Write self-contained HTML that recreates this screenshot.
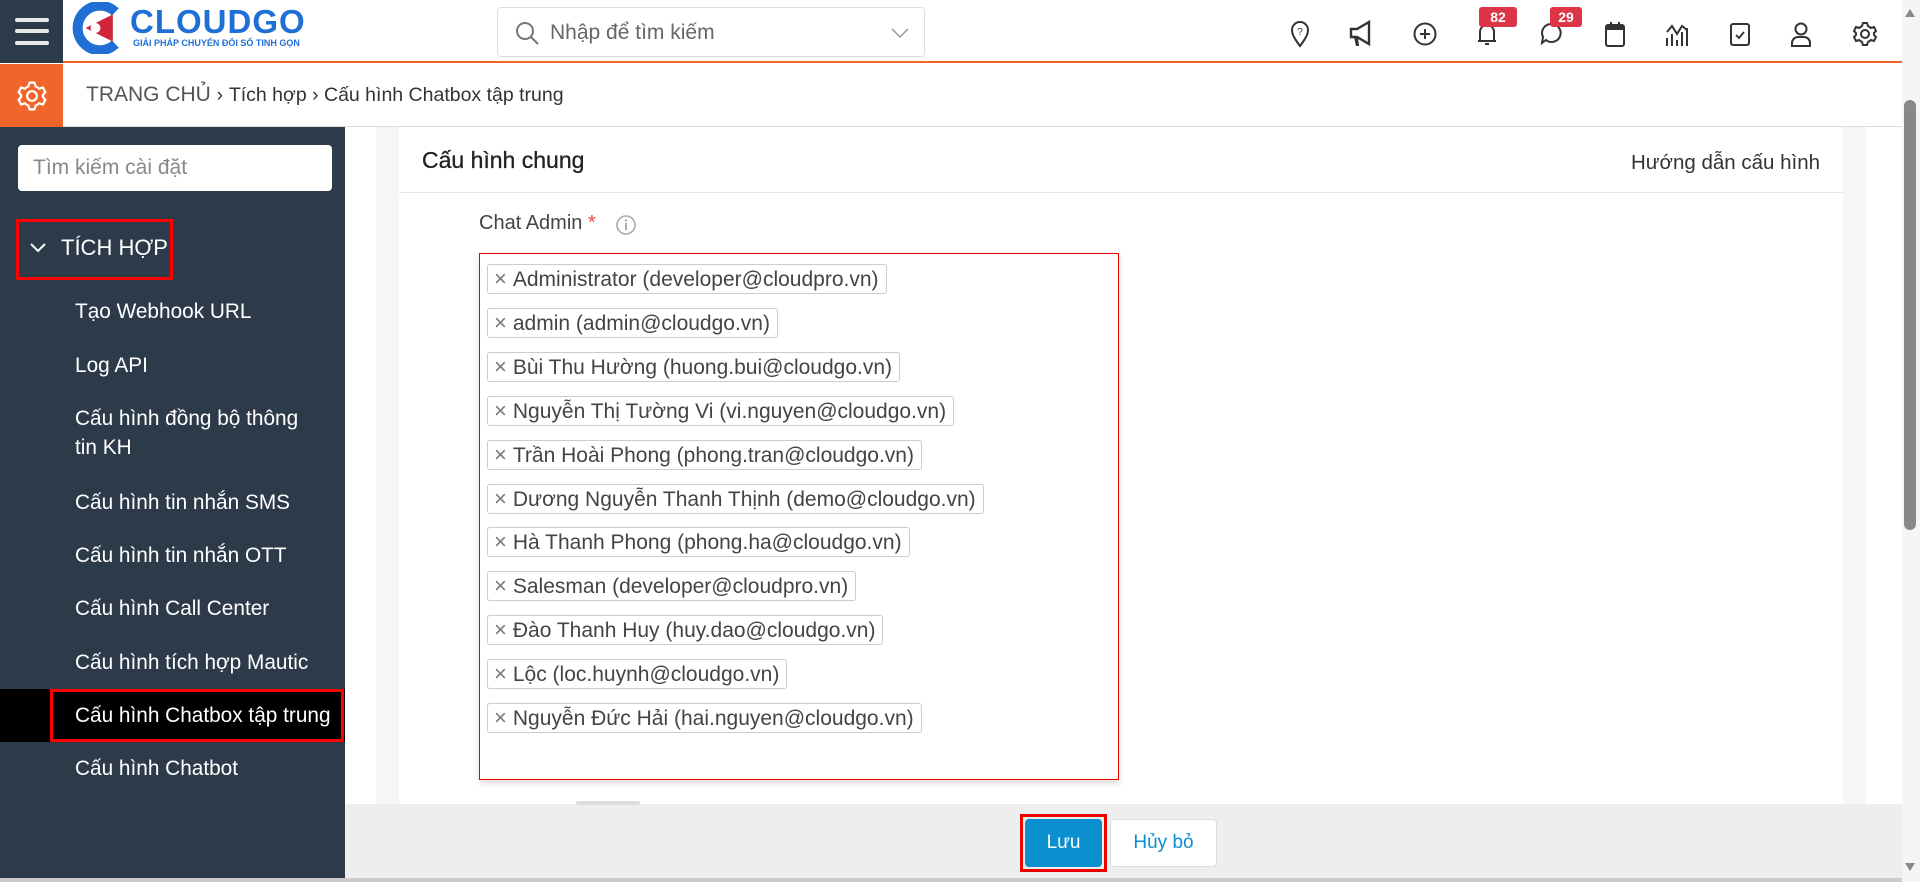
<!DOCTYPE html>
<html><head><meta charset="utf-8">
<style>
*{box-sizing:border-box;margin:0;padding:0}
body{width:1920px;height:882px;overflow:hidden;position:relative;font-family:"Liberation Sans",sans-serif;background:#fff;color:#333}
.abs{position:absolute}
.top{left:0;top:0;width:1902px;height:63px;background:#fff;border-bottom:2px solid #f0652a}
.ham{left:0;top:0;width:63px;height:63px;background:#2d3a4a}
.ham span{position:absolute;left:15px;width:34px;height:4px;background:#e8e8e8;border-radius:2px}
.search{left:497px;top:7px;width:428px;height:50px;border:1px solid #ddd;border-radius:4px;background:#fff}
.search .ph{position:absolute;left:52px;top:13px;font-size:21px;color:#666}
.bc{left:0;top:64px;width:1902px;height:63px;background:#fff;border-bottom:1px solid #ddd}
.gear{left:0;top:64px;width:63px;height:63px;background:#f0652a}
.side{left:0;top:127px;width:345px;height:755px;background:#2d3a4a;color:#fff}
.sin{left:18px;top:145px;width:314px;height:46px;background:#fff;border-radius:4px;color:#888;font-size:21px;padding:11px 15px}
.item{position:absolute;left:75px;font-size:20.8px;color:#fff;line-height:29px}
.icon{position:absolute;top:20px}
.badge{position:absolute;top:7px;height:20px;background:#dc3545;color:#fff;font-size:14px;font-weight:bold;border-radius:3px;text-align:center;line-height:20px}
.tag{position:absolute;left:487px;height:30px;border:1px solid #ccc;border-radius:3px;font-size:21px;color:#444;line-height:28px;padding:0 7px 0 6px;white-space:nowrap;background:#fff}
.tag b{font-weight:normal;color:#777;margin-right:6px;font-size:22px}
</style></head><body>
<div class="abs top"></div>
<div class="abs ham"><span style="top:18px"></span><span style="top:29px"></span><span style="top:41px"></span></div>
<svg class="abs" style="left:70px;top:2px" width="56" height="52" viewBox="0 0 44 42">
<path d="M36 8 A18 18 0 1 0 36 34" fill="none" stroke="#1f6fd6" stroke-width="8"/>
<path d="M12 21 L34 10 L34 32 Z" fill="#d0253c"/><circle cx="20" cy="21" r="4" fill="#fff"/>
</svg>
<div class="abs" style="left:130px;top:3px;font-size:33px;font-weight:bold;color:#1f6fd6;letter-spacing:1px">CLOUDGO</div>
<div class="abs" style="left:133px;top:38px;font-size:9px;font-weight:bold;color:#1f6fd6">GIẢI PHÁP CHUYỂN ĐỔI SỐ TINH GỌN</div>
<div class="abs search">
<svg style="position:absolute;left:16px;top:12px" width="26" height="26" viewBox="0 0 26 26"><circle cx="11" cy="11" r="8" fill="none" stroke="#777" stroke-width="2"/><path d="M17 17l7 7" stroke="#777" stroke-width="2"/></svg>
<div class="ph">Nhập để tìm kiếm</div>
<svg style="position:absolute;right:14px;top:18px" width="20" height="14" viewBox="0 0 20 14"><path d="M2 3l8 8 8-8" fill="none" stroke="#999" stroke-width="1.5"/></svg>
</div>
<svg class="icon" style="left:1289px" width="22" height="28" viewBox="0 0 22 28"><path d="M11 26C5 18 3 14 3 10a8 8 0 0 1 16 0c0 4-2 8-8 16z" fill="none" stroke="#333" stroke-width="2"/><text x="11" y="15" font-size="10" text-anchor="middle" fill="#333" font-family="Liberation Sans">?</text></svg>
<svg class="icon" style="left:1348px" width="26" height="28" viewBox="0 0 26 28"><path d="M3 9h6l12-7v22L9 17H3z" fill="none" stroke="#333" stroke-width="2.4"/><path d="M6 17l2 9h3l-1-9" fill="#333"/></svg>
<svg class="icon" style="left:1412px" width="26" height="28" viewBox="0 0 26 28"><circle cx="13" cy="14" r="10.5" fill="none" stroke="#333" stroke-width="2"/><path d="M13 9v10M8 14h10" stroke="#333" stroke-width="2"/></svg>
<svg class="icon" style="left:1475px" width="24" height="28" viewBox="0 0 24 28"><path d="M5 21V12a7 7 0 0 1 14 0v9M3 21h18M10 24h4" fill="none" stroke="#333" stroke-width="2"/></svg>
<div class="badge" style="left:1479px;width:38px">82</div>
<svg class="icon" style="left:1538px" width="26" height="28" viewBox="0 0 26 28"><path d="M13 4a9 9 0 1 1-5 16l-4 3 1-6A9 9 0 0 1 13 4z" fill="none" stroke="#333" stroke-width="2"/></svg>
<div class="badge" style="left:1550px;width:32px">29</div>
<svg class="icon" style="left:1603px" width="24" height="28" viewBox="0 0 24 28"><rect x="3" y="5" width="18" height="21" rx="2" fill="none" stroke="#333" stroke-width="2"/><rect x="3" y="5" width="18" height="5" fill="#333"/><path d="M8 2v4M16 2v4" stroke="#333" stroke-width="2"/></svg>
<svg class="icon" style="left:1664px" width="26" height="28" viewBox="0 0 26 28"><path d="M3 26v-8M8 26V14M13 26v-6M18 26V12M23 26V8M3 12l5-6 5 8 5-8 5 4" fill="none" stroke="#333" stroke-width="2"/></svg>
<svg class="icon" style="left:1728px" width="24" height="28" viewBox="0 0 24 28"><rect x="3" y="4" width="18" height="21" rx="2" fill="none" stroke="#333" stroke-width="2"/><path d="M8 15l3 3 5-6" fill="none" stroke="#333" stroke-width="1.8"/></svg>
<svg class="icon" style="left:1789px" width="24" height="28" viewBox="0 0 24 28"><circle cx="12" cy="9" r="5.5" fill="none" stroke="#333" stroke-width="2"/><path d="M3 26v-3a6 6 0 0 1 6-6h6a6 6 0 0 1 6 6v3z" fill="none" stroke="#333" stroke-width="2"/></svg>
<svg class="icon" style="left:1852px" width="26" height="28" viewBox="0 0 26 28"><circle cx="13" cy="14" r="4" fill="none" stroke="#333" stroke-width="2"/><path d="M11 3h4l1 3 3 2 3-1 2 4-2 2v2l2 2-2 4-3-1-3 2-1 3h-4l-1-3-3-2-3 1-2-4 2-2v-2l-2-2 2-4 3 1 3-2z" fill="none" stroke="#333" stroke-width="2"/></svg>
<div class="abs bc"></div>
<div class="abs gear"><svg style="position:absolute;left:15px;top:15px" width="34" height="34" viewBox="0 0 26 28"><circle cx="13" cy="14" r="4" fill="none" stroke="#fff" stroke-width="1.8"/><path d="M11 3h4l1 3 3 2 3-1 2 4-2 2v2l2 2-2 4-3-1-3 2-1 3h-4l-1-3-3-2-3 1-2-4 2-2v-2l-2-2 2-4 3 1 3-2z" fill="none" stroke="#fff" stroke-width="1.8"/></svg></div>
<div class="abs" style="left:86px;top:83px;font-size:21px;color:#555;white-space:nowrap">TRANG CHỦ <span style="font-size:19px;color:#333">›</span> <span style="font-size:19.5px;color:#333">Tích hợp › Cấu hình Chatbox tập trung</span></div>
<div class="abs side"></div>
<div class="abs sin">Tìm kiếm cài đặt</div>
<div class="abs" style="left:16px;top:219px;width:157px;height:61px;border:3px solid #f00"></div>
<svg class="abs" style="left:29px;top:241px" width="18" height="14" viewBox="0 0 18 14"><path d="M2 3l7 7 7-7" fill="none" stroke="#fff" stroke-width="2"/></svg>
<div class="abs" style="left:61px;top:235px;font-size:22px;color:#fff">TÍCH HỢP</div>
<div class="abs" style="left:0;top:689px;width:345px;height:53px;background:#000"></div>
<div class="abs" style="left:50px;top:689px;width:294px;height:53px;border:3px solid #f00"></div>
<div class="item" style="top:297px">Tạo Webhook URL</div>
<div class="item" style="top:351px">Log API</div>
<div class="item" style="top:404px">Cấu hình đồng bộ thông<br>tin KH</div>
<div class="item" style="top:488px">Cấu hình tin nhắn SMS</div>
<div class="item" style="top:541px">Cấu hình tin nhắn OTT</div>
<div class="item" style="top:594px">Cấu hình Call Center</div>
<div class="item" style="top:648px">Cấu hình tích hợp Mautic</div>
<div class="item" style="top:701px">Cấu hình Chatbox tập trung</div>
<div class="item" style="top:754px">Cấu hình Chatbot</div>
<div class="abs" style="left:376px;top:127px;width:23px;height:677px;background:#f6f6f6"></div>
<div class="abs" style="left:1843px;top:127px;width:23px;height:677px;background:#f6f6f6"></div>
<div class="abs" style="left:399px;top:127px;width:1444px;height:66px;border-bottom:1px solid #e8e8e8"></div>
<div class="abs" style="left:422px;top:147px;font-size:23px;color:#222;-webkit-text-stroke:0.3px #222">Cấu hình chung</div>
<div class="abs" style="left:1631px;top:151px;font-size:20.5px;color:#333">Hướng dẫn cấu hình</div>
<div class="abs" style="left:479px;top:212px;font-size:20px;color:#444">Chat Admin <span style="color:#e44">*</span></div>
<svg class="abs" style="left:615px;top:214px" width="22" height="22" viewBox="0 0 22 22"><circle cx="11" cy="11" r="9" fill="none" stroke="#aaa" stroke-width="1.6"/><circle cx="11" cy="6.5" r="1.2" fill="#aaa"/><path d="M11 9v7" stroke="#aaa" stroke-width="2"/></svg>
<div class="abs" style="left:479px;top:253px;width:640px;height:527px;border:1px solid #e00;box-shadow:0 3px 6px rgba(0,0,0,.15)"></div>
<div class="tag" style="top:264px"><b>×</b>Administrator (developer@cloudpro.vn)</div>
<div class="tag" style="top:308px"><b>×</b>admin (admin@cloudgo.vn)</div>
<div class="tag" style="top:352px"><b>×</b>Bùi Thu Hường (huong.bui@cloudgo.vn)</div>
<div class="tag" style="top:396px"><b>×</b>Nguyễn Thị Tường Vi (vi.nguyen@cloudgo.vn)</div>
<div class="tag" style="top:440px"><b>×</b>Trần Hoài Phong (phong.tran@cloudgo.vn)</div>
<div class="tag" style="top:484px"><b>×</b>Dương Nguyễn Thanh Thịnh (demo@cloudgo.vn)</div>
<div class="tag" style="top:527px"><b>×</b>Hà Thanh Phong (phong.ha@cloudgo.vn)</div>
<div class="tag" style="top:571px"><b>×</b>Salesman (developer@cloudpro.vn)</div>
<div class="tag" style="top:615px"><b>×</b>Đào Thanh Huy (huy.dao@cloudgo.vn)</div>
<div class="tag" style="top:659px"><b>×</b>Lộc (loc.huynh@cloudgo.vn)</div>
<div class="tag" style="top:703px"><b>×</b>Nguyễn Đức Hải (hai.nguyen@cloudgo.vn)</div>
<div class="abs" style="left:345px;top:804px;width:1557px;height:74px;background:#eee"></div>
<div class="abs" style="left:576px;top:801px;width:64px;height:4px;background:#ddd;border-radius:2px"></div>
<div class="abs" style="left:1020px;top:814px;width:87px;height:58px;border:3px solid #e00"></div>
<div class="abs" style="left:1025px;top:819px;width:77px;height:48px;background:#0a8fd0;border-radius:4px;color:#fff;font-size:19px;text-align:center;line-height:48px">Lưu</div>
<div class="abs" style="left:1110px;top:819px;width:107px;height:48px;background:#fff;border:1px solid #ddd;border-radius:4px;color:#0a8fd0;font-size:19px;text-align:center;line-height:46px">Hủy bỏ</div>
<div class="abs" style="left:0;top:878px;width:1920px;height:4px;background:#ccc"></div>
<div class="abs" style="left:1902px;top:0;width:18px;height:882px;background:#f5f5f5"></div>
<div class="abs" style="left:1904px;top:100px;width:12px;height:430px;background:#888;border-radius:6px"></div>
<svg class="abs" style="left:1904px;top:8px" width="12" height="10"><path d="M6 1l5 8H1z" fill="#888"/></svg>
<svg class="abs" style="left:1904px;top:862px" width="12" height="10"><path d="M6 9l5-8H1z" fill="#888"/></svg>
</body></html>
